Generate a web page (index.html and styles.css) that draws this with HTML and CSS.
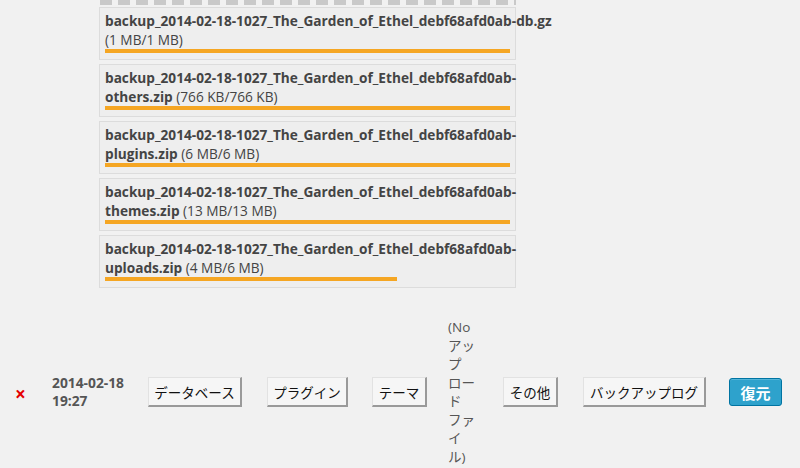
FILE: index.html
```html
<!DOCTYPE html>
<html lang="ja">
<head>
<meta charset="utf-8">
<title>Restore</title>
<link rel="stylesheet" href="styles.css">
</head>
<body>
<div class="uploads">
  <div class="dash"></div>
  <div class="files">
    <div class="file">
      <div class="name"><b>backup_2014-02-18-1027_The_Garden_of_Ethel_debf68afd0ab-db.gz</b><br>(1 MB/1 MB)</div>
      <div class="bar"><div class="fill" style="width:100%"></div></div>
    </div>
    <div class="file">
      <div class="name"><b>backup_2014-02-18-1027_The_Garden_of_Ethel_debf68afd0ab-</b><br><b>others.zip</b> (766 KB/766 KB)</div>
      <div class="bar"><div class="fill" style="width:100%"></div></div>
    </div>
    <div class="file">
      <div class="name"><b>backup_2014-02-18-1027_The_Garden_of_Ethel_debf68afd0ab-</b><br><b>plugins.zip</b> (6 MB/6 MB)</div>
      <div class="bar"><div class="fill" style="width:100%"></div></div>
    </div>
    <div class="file">
      <div class="name"><b>backup_2014-02-18-1027_The_Garden_of_Ethel_debf68afd0ab-</b><br><b>themes.zip</b> (13 MB/13 MB)</div>
      <div class="bar"><div class="fill" style="width:100%"></div></div>
    </div>
    <div class="file">
      <div class="name"><b>backup_2014-02-18-1027_The_Garden_of_Ethel_debf68afd0ab-</b><br><b>uploads.zip</b> (4 MB/6 MB)</div>
      <div class="bar"><div class="fill" style="width:72%"></div></div>
    </div>
  </div>
</div>

<div class="row">
  <div class="cell del">×</div>
  <div class="cell date">2014-02-18<br>19:27</div>
  <div class="cell c-db"><button class="btn w-db">データベース</button></div>
  <div class="cell c-pl"><button class="btn w-pl">プラグイン</button></div>
  <div class="cell c-th"><button class="btn w-th">テーマ</button></div>
  <div class="cell nofile">(No<br>アッ<br>プ<br>ロー<br>ド<br>ファ<br>イ<br>ル)</div>
  <div class="cell c-ot"><button class="btn w-ot">その他</button></div>
  <div class="cell c-log"><button class="btn w-log">バックアップログ</button></div>
  <div class="cell c-rs"><button class="btn-primary">復元</button></div>
</div>
</body>
</html>
```

FILE: styles.css
```css
html, body {
  margin: 0;
  padding: 0;
  background: #f1f1f1;
}
body {
  font-family: "Open Sans", "Noto Sans CJK JP", sans-serif;
  font-size: 13px;
  color: #444;
  width: 800px;
  height: 468px;
  overflow: hidden;
}
.uploads {
  margin-left: 99px;
  width: 417px;
}
.dash {
  height: 5px;
  background: repeating-linear-gradient(90deg, #c9c9c9 0 12px, transparent 12px 18px);
  margin-left: 1px;
}
.files {
  display: flex;
  flex-direction: column;
  gap: 4px;
  margin-top: 2px;
}
.file {
  border: 1px solid #dcdcdc;
  background: #eeeeee;
  padding: 3px 5px 4px 5px;
  height: 44px;
}
.name {
  white-space: nowrap;
  font-size: 13.65px;
  line-height: 19px;
  color: #444;
}
.name b {
  font-weight: 700;
}
.bar {
  height: 4px;
}
.fill {
  height: 4px;
  background: #f5a623;
}
.row {
  display: flex;
  align-items: center;
  margin-top: 30px;
}
.cell {
  flex: none;
}
.del {
  width: 19px;
  margin-left: 15px;
  color: #e50000;
  font-weight: 700;
  font-size: 19px;
  line-height: 20px;
  margin-top: 4px;
}
.date {
  margin-left: 18px;
  width: 96px;
  font-weight: 700;
  font-size: 13.8px;
  line-height: 18px;
  color: #555;
}
.c-pl { margin-left: 25px; }
.c-th { margin-left: 24px; }
.nofile {
  margin-left: 21px;
  width: 30px;
  font-size: 13.5px;
  line-height: 18.5px;
  color: #555;
}
.c-ot { margin-left: 25px; }
.c-log { margin-left: 25px; }
.c-rs { margin-left: 23px; }
.btn {
  font-family: "Noto Sans CJK JP", sans-serif;
  font-size: 13.5px;
  color: #111;
  height: 30px;
  padding: 0;
  text-align: center;
  background: #f6f6f6;
  border-style: solid;
  border-width: 1px 2px 2px 1px;
  border-color: #e2e2e2 #9a9a9a #9a9a9a #e2e2e2;
  border-radius: 0;
  display: block;
}
.w-db { width: 94px; }
.w-pl { width: 81px; }
.w-th { width: 55px; }
.w-ot { width: 55px; }
.w-log { width: 123px; }
.btn-primary {
  font-family: "Noto Sans CJK JP", sans-serif;
  font-size: 15px;
  font-weight: 700;
  color: #fff;
  height: 28px;
  width: 53px;
  padding: 0;
  background: #2ea2cc;
  border: 1px solid #0074a2;
  border-radius: 3px;
  box-shadow: inset 0 1px 0 rgba(120,200,230,.5);
  display: block;
}
```
